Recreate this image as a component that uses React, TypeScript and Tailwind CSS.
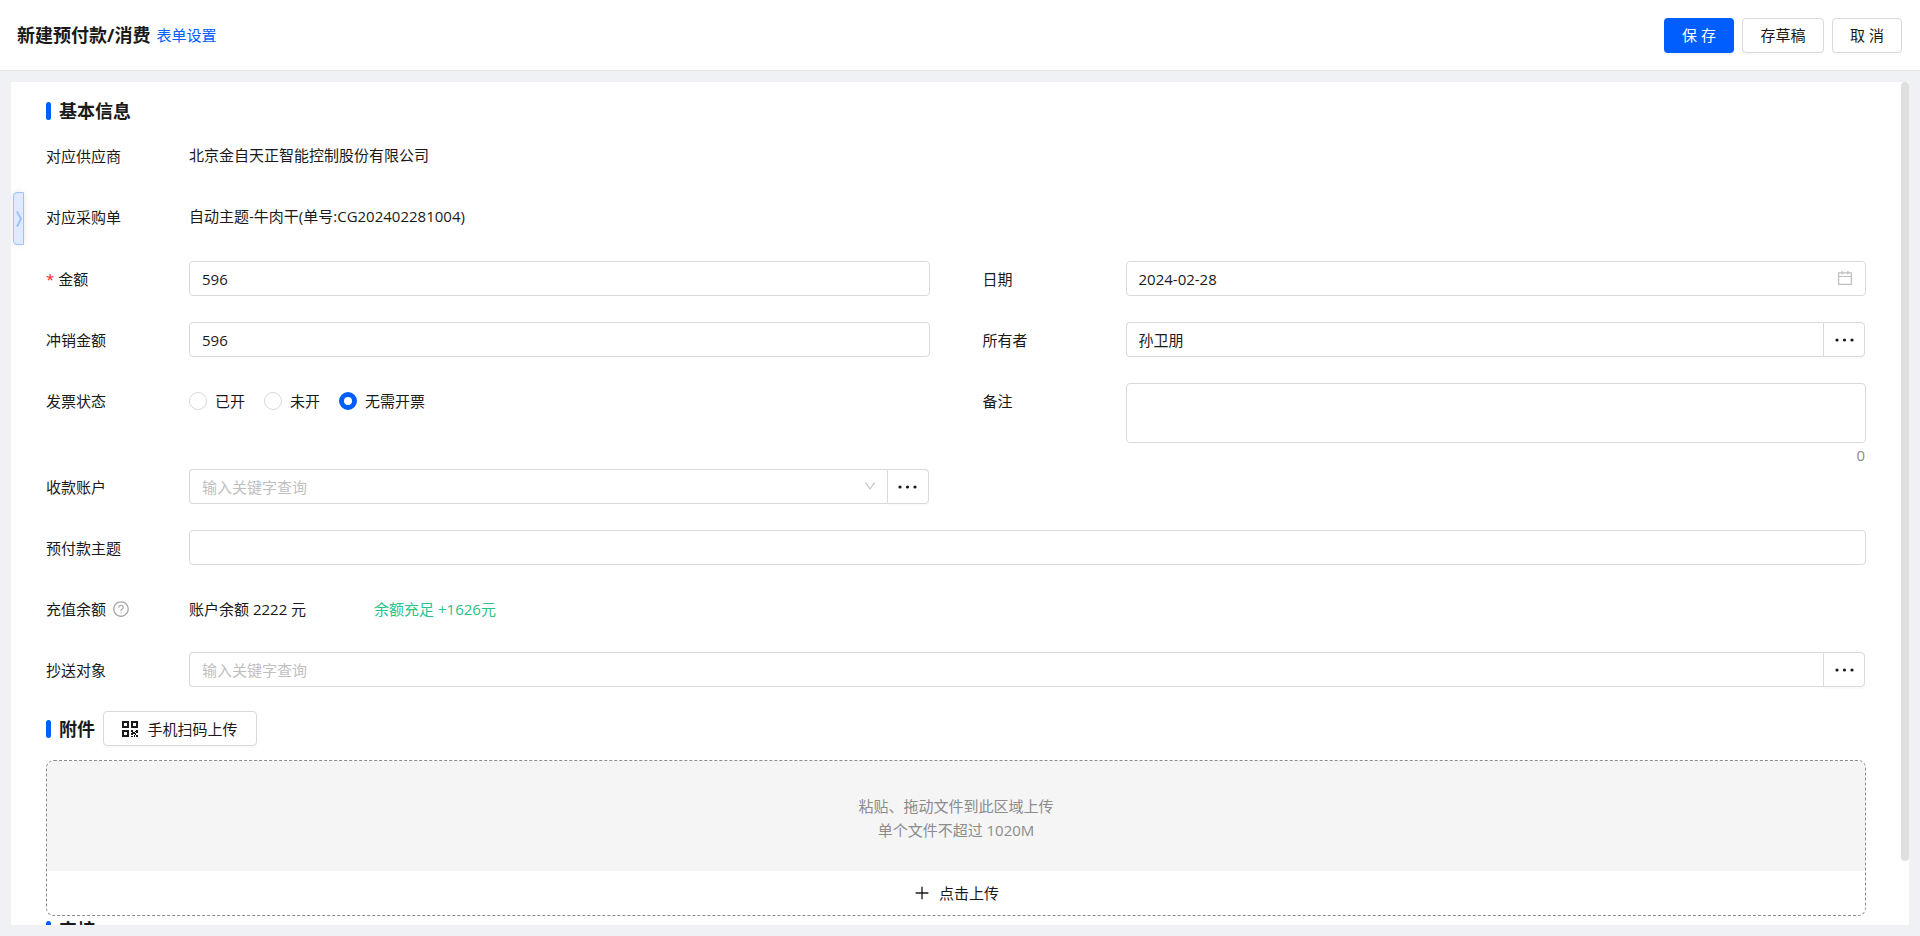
import React, { useState } from "react";
import {
  AiOutlineCalendar,
  AiOutlineDown,
  AiOutlinePlus,
  AiOutlineQuestionCircle,
} from "react-icons/ai";

const inputClass =
  "block h-[35px] w-full min-w-0 rounded border border-[#d9d9d9] bg-white px-3 text-[15px] text-[#1a1a1a] outline-none placeholder:text-[#bfbfbf] focus:border-[#005eff]";

const buttonClass =
  "h-[35px] rounded border border-[#d9d9d9] bg-white text-[15px] text-[#1a1a1a] shadow-[0_2px_0_rgba(0,0,0,0.02)]";

const invoiceOptions = [
  { value: "issued", label: "已开" },
  { value: "pending", label: "未开" },
  { value: "none", label: "无需开票" },
];

type FieldProps = {
  label: string;
  htmlFor?: string;
  required?: boolean;
  hint?: boolean;
  children: React.ReactNode;
};

const Field: React.FC<FieldProps> = ({ label, htmlFor, required, hint, children }) => {
  const Label = htmlFor ? "label" : "div";
  return (
    <div className="flex items-start">
      <Label
        {...(htmlFor ? { htmlFor } : {})}
        className="flex h-[35px] w-[143px] shrink-0 items-center"
      >
        {required && <span className="mr-1 text-[#f5222d]">*</span>}
        {label}
        {hint && <AiOutlineQuestionCircle className="ml-1.5 size-[18px] text-[#a6a6a6]" />}
      </Label>
      <div className="min-w-0 flex-1">{children}</div>
    </div>
  );
};

const Dots = () => (
  <svg viewBox="0 0 19 4" className="mx-auto h-1 w-[19px]" fill="currentColor" aria-hidden="true">
    <circle cx="2" cy="2" r="1.6" />
    <circle cx="9.5" cy="2" r="1.6" />
    <circle cx="17" cy="2" r="1.6" />
  </svg>
);

type PickerProps = {
  id: string;
  defaultValue?: string;
  placeholder?: string;
  dropdown?: boolean;
};

const Picker: React.FC<PickerProps> = ({ id, defaultValue, placeholder, dropdown }) => (
  <div className="flex pr-px">
    <div className="relative min-w-0 flex-1">
      <input
        id={id}
        type="text"
        defaultValue={defaultValue}
        placeholder={placeholder}
        className={`${inputClass} rounded-r-none border-r-0`}
      />
      {dropdown && (
        <AiOutlineDown className="pointer-events-none absolute top-[10px] right-2.5 size-[14px] text-[#bfbfbf]" />
      )}
    </div>
    <button
      type="button"
      aria-label="选择"
      className={`${buttonClass} w-[42px] shrink-0 rounded-l-none`}
    >
      <Dots />
    </button>
  </div>
);

const SectionTitle: React.FC<{ title: string; children?: React.ReactNode }> = ({
  title,
  children,
}) => (
  <div className="flex h-[35px] items-center">
    <span className="h-[18px] w-[5px] rounded-sm bg-[#005eff]" />
    <h2 className="mr-2 ml-2 text-lg font-bold">{title}</h2>
    {children}
  </div>
);

const QrIcon = () => (
  <svg viewBox="0 0 16 16" className="size-4" fill="currentColor" aria-hidden="true">
    <path
      fillRule="evenodd"
      d="M0 0h7v7H0zM2 2v3h3V2zM9 0h7v7H9zM11 2v3h3V2zM0 9h7v7H0zM2 11v3h3v-3z"
    />
    <path d="M9 9h2v2h2v2h-2v1H9v-2h1v-1H9zM14 9h2v3h-2v-1h-1v-1h1zM13 12h1v2h-1zM9 15h2v1H9zM12 14h1v2h-1zM14 14h2v2h-2z" />
  </svg>
);

export default function App() {
  const [invoice, setInvoice] = useState("none");
  const [remark, setRemark] = useState("");

  return (
    <div className="flex h-screen flex-col bg-[#f0f1f5] font-['Open_Sans','Noto_Sans_CJK_SC',sans-serif] text-[15px] leading-6 text-[#1a1a1a]">
      <header className="flex h-[71px] shrink-0 items-center border-b border-[#e5e5e5] bg-white pr-[18px] pl-[17px]">
        <h1 className="text-lg font-bold">新建预付款/消费</h1>
        <a href="#settings" className="ml-1.5 text-[#005eff]">
          表单设置
        </a>
        <div className="ml-auto flex gap-2">
          <button
            type="submit"
            form="prepay"
            className="h-[35px] w-[70px] rounded bg-[#005eff] text-[15px] text-white shadow-[0_2px_0_rgba(0,0,0,0.04)]"
          >
            保 存
          </button>
          <button type="button" className={`${buttonClass} w-[82px]`}>
            存草稿
          </button>
          <button type="button" className={`${buttonClass} w-[70px]`}>
            取 消
          </button>
        </div>
      </header>

      <main className="relative mx-[11px] mt-[11px] mb-[11px] min-h-0 flex-1 overflow-hidden bg-white">
        <form
          id="prepay"
          onSubmit={(e) => e.preventDefault()}
          className="h-full overflow-y-auto pt-[11px] pr-[43px] pl-[35px] [scrollbar-width:none]"
        >
          <SectionTitle title="基本信息" />

          <div className="mt-[10px] flex flex-col gap-[26px]">
            <Field label="对应供应商">
              <p className="leading-[35px]">北京金自天正智能控制股份有限公司</p>
            </Field>
            <Field label="对应采购单">
              <p className="leading-[35px]">自动主题-牛肉干(单号:CG202402281004)</p>
            </Field>
          </div>

          <div className="mt-[27px] grid grid-cols-2 gap-x-[53px] gap-y-[26px]">
            <Field label="金额" htmlFor="amount" required>
              <input id="amount" type="text" defaultValue="596" className={inputClass} />
            </Field>
            <Field label="日期" htmlFor="date">
              <div className="relative">
                <input id="date" type="text" defaultValue="2024-02-28" className={inputClass} />
                <AiOutlineCalendar className="pointer-events-none absolute top-[8px] right-3 size-[18px] text-[#bfbfbf]" />
              </div>
            </Field>
            <Field label="冲销金额" htmlFor="offset">
              <input id="offset" type="text" defaultValue="596" className={inputClass} />
            </Field>
            <Field label="所有者" htmlFor="owner">
              <Picker id="owner" defaultValue="孙卫朋" />
            </Field>
            <Field label="发票状态">
              <div className="flex h-[35px] items-center gap-[19px]">
                {invoiceOptions.map((option) => (
                  <label key={option.value} className="flex items-center gap-2">
                    <input
                      type="radio"
                      name="invoice"
                      value={option.value}
                      checked={invoice === option.value}
                      onChange={() => setInvoice(option.value)}
                      className="size-[18px] appearance-none rounded-full border border-[#d9d9d9] bg-white checked:border-[5px] checked:border-[#005eff]"
                    />
                    {option.label}
                  </label>
                ))}
              </div>
            </Field>
            <Field label="备注" htmlFor="remark">
              <textarea
                id="remark"
                value={remark}
                onChange={(e) => setRemark(e.target.value)}
                className="block h-[60px] w-full resize-none rounded border border-[#d9d9d9] px-3 py-1 outline-none focus:border-[#005eff]"
              />
              <div className="-mb-6 pr-px text-right text-[#8c8c8c]">{remark.length}</div>
            </Field>
          </div>

          <div className="mt-[26px] flex flex-col gap-[26px]">
            <div className="grid grid-cols-2 gap-x-[53px]">
              <Field label="收款账户" htmlFor="account">
                <Picker id="account" placeholder="输入关键字查询" dropdown />
              </Field>
            </div>
            <Field label="预付款主题" htmlFor="subject">
              <input id="subject" type="text" className={inputClass} />
            </Field>
            <Field label="充值余额" hint>
              <div className="flex h-[35px] items-center gap-[68px]">
                <span>账户余额 2222 元</span>
                <span className="text-[#2dc28a]">余额充足 +1626元</span>
              </div>
            </Field>
            <Field label="抄送对象" htmlFor="cc">
              <Picker id="cc" placeholder="输入关键字查询" />
            </Field>
          </div>

          <div className="mt-6">
            <SectionTitle title="附件">
              <button
                type="button"
                className={`${buttonClass} flex w-[154px] items-center justify-center gap-[9px]`}
              >
                <QrIcon />
                手机扫码上传
              </button>
            </SectionTitle>
          </div>

          <div className="mt-[14px] overflow-hidden rounded-lg border border-dashed border-[#8c8c8c]">
            <div className="flex h-[110px] flex-col items-center justify-center bg-[#f5f5f5] pt-1 text-[#8c8c8c]">
              <p>粘贴、拖动文件到此区域上传</p>
              <p>单个文件不超过 1020M</p>
            </div>
            <button type="button" className="flex h-[44px] w-full items-center justify-center gap-2">
              <AiOutlinePlus className="size-[18px]" />
              点击上传
            </button>
          </div>

          <div className="-mt-1 pb-9">
            <SectionTitle title="审核" />
          </div>
        </form>

        <button
          type="button"
          aria-label="展开"
          className="absolute top-[110px] left-[2px] flex h-[53px] w-[11px] items-center justify-center rounded-l border border-[#9fc1ff] bg-[#dfe9ff] text-[#9fc1ff] shadow-[0_0_6px_rgba(0,0,0,0.1)]"
        >
          <svg viewBox="0 0 6 16" className="h-4 w-1.5 shrink-0" fill="none" stroke="currentColor" strokeWidth="2">
            <path d="M1 0.5L5 8L1 15.5" />
          </svg>
        </button>
        <div className="absolute top-0 right-0 h-[92.4%] w-2 rounded-full bg-[#dfdfdf]" />
      </main>
    </div>
  );
}
